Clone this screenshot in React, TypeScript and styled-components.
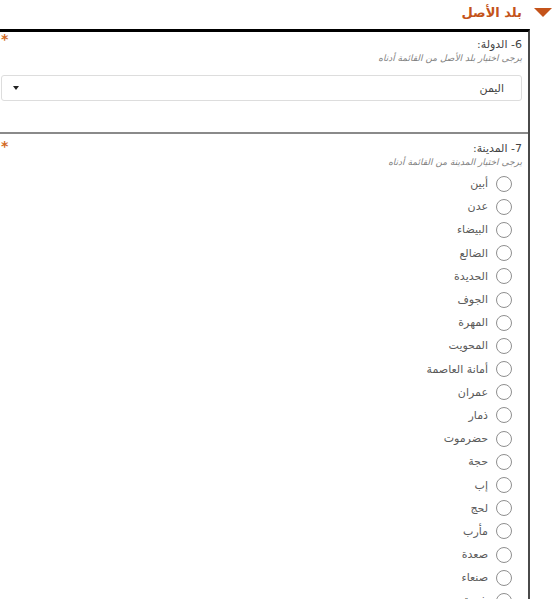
import { createGlobalStyle } from "styled-components";
import styled from "styled-components";

const cities = [
  "أبين",
  "عدن",
  "البيضاء",
  "الضالع",
  "الحديدة",
  "الجوف",
  "المهرة",
  "المحويت",
  "أمانة العاصمة",
  "عمران",
  "ذمار",
  "حضرموت",
  "حجة",
  "إب",
  "لحج",
  "مأرب",
  "صعدة",
  "صنعاء",
  "شبوة",
];

const GlobalStyle = createGlobalStyle`
  html, body {
    margin: 0;
    padding: 0;
    background: #ffffff;
    overflow: hidden;
  }
  body {
    font-family: "DejaVu Sans", "Liberation Sans", sans-serif;
    direction: rtl;
  }
`;

const App = () => {
  return (
    <>
      <GlobalStyle />
      <Page>
        <SectionHeader>
          <Caret />
          <SectionTitle>بلد الأصل</SectionTitle>
        </SectionHeader>

        <Panel>
          <Field>
            <Required>*</Required>
            <Label>6- الدولة:</Label>
            <Hint>يرجى اختيار بلد الأصل من القائمة أدناه</Hint>
            <SelectBox>
              <SelectValue>اليمن</SelectValue>
              <SelectArrow />
            </SelectBox>
          </Field>

          <Field $last>
            <Required $low>*</Required>
            <Label>7- المدينة:</Label>
            <Hint>يرجى اختيار المدينة من القائمة أدناه</Hint>
            <RadioList>
              {cities.map((city) => (
                <RadioRow key={city}>
                  <RadioCircle />
                  <RadioText>{city}</RadioText>
                </RadioRow>
              ))}
            </RadioList>
          </Field>
        </Panel>
      </Page>
    </>
  );
};

// Styled Components
const Page = styled.div`
  width: 554px;
  height: 599px;
  overflow: hidden;
`;

const SectionHeader = styled.div`
  display: flex;
  align-items: center;
  gap: 12px;
  height: 29px;
  padding-right: 2px;
  box-sizing: border-box;
  padding-bottom: 4px;
`;

const Caret = styled.span`
  width: 0;
  height: 0;
  border-left: 9px solid transparent;
  border-right: 9px solid transparent;
  border-top: 9px solid #c4531a;
`;

const SectionTitle = styled.span`
  color: #c4531a;
  font-size: 13px;
  font-weight: bold;
`;

const Panel = styled.div`
  margin-right: 24px;
  margin-left: -10px;
  border-top: 3px solid #000000;
  border-right: 2px solid #4a4a4a;
`;

const Field = styled.div<{ $last?: boolean }>`
  position: relative;
  padding: ${({ $last }) => ($last ? "8px 6px 0 0" : "6px 6px 0 0")};
  height: ${({ $last }) => ($last ? "auto" : "94px")};
  border-bottom: ${({ $last }) => ($last ? "none" : "2px solid #8a8a8a")};
`;

const Required = styled.span<{ $low?: boolean }>`
  position: absolute;
  left: 11px;
  top: ${({ $low }) => ($low ? "4px" : "-1px")};
  color: #d2691e;
  font-size: 14px;
  font-weight: bold;
`;

const Label = styled.div`
  font-size: 11px;
  color: #444444;
  line-height: 14px;
`;

const Hint = styled.div`
  font-size: 9px;
  font-style: italic;
  color: #808080;
  line-height: 12px;
`;

const SelectBox = styled.div`
  display: flex;
  align-items: center;
  justify-content: space-between;
  margin: 11px 0 0 11px;
  height: 26px;
  box-sizing: border-box;
  border: 1px solid #dddddd;
  border-radius: 3px;
  padding: 0 17px 0 11px;
`;

const SelectValue = styled.span`
  font-size: 11px;
  color: #444444;
`;

const SelectArrow = styled.span`
  width: 0;
  height: 0;
  border-left: 3px solid transparent;
  border-right: 3px solid transparent;
  border-top: 4px solid #222222;
`;

const RadioList = styled.div`
  display: flex;
  flex-direction: column;
  padding-top: 4px;
  padding-right: 10px;
`;

const RadioRow = styled.div`
  display: flex;
  align-items: center;
  gap: 8px;
  height: 23.2px;
`;

const RadioCircle = styled.span`
  width: 14px;
  height: 14px;
  border: 1px solid #8f8f8f;
  border-radius: 50%;
  background: #ffffff;
  flex-shrink: 0;
`;

const RadioText = styled.span`
  font-size: 11px;
  color: #5a5a5a;
`;

export default App;
